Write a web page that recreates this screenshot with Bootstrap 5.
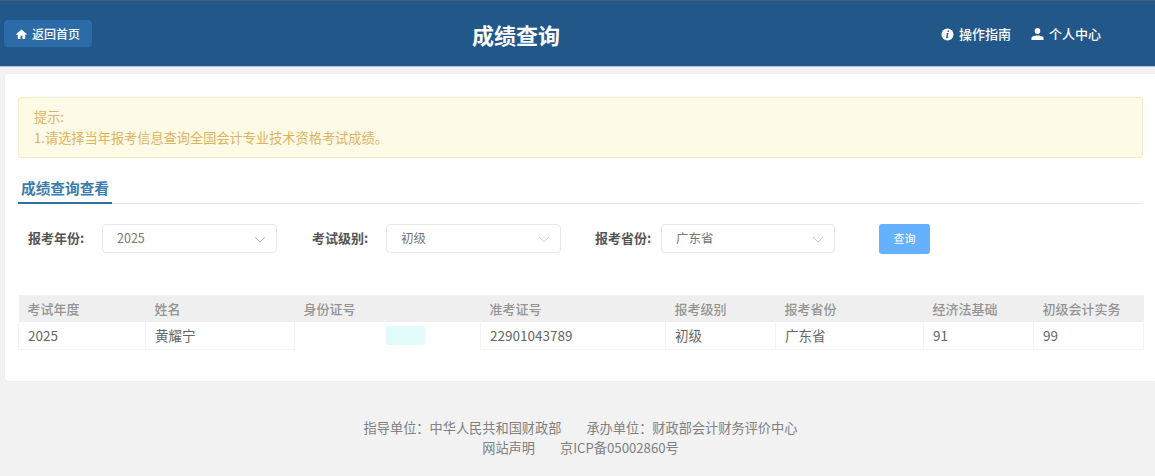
<!DOCTYPE html>
<html lang="zh-CN">
<head>
<meta charset="utf-8">
<title>成绩查询</title>
<link rel="stylesheet" href="https://cdn.jsdelivr.net/npm/bootstrap@5.3.0/dist/css/bootstrap.min.css">
<style>
html,body{height:476px;overflow:hidden}
body{background:#f2f2f2;font-family:"Liberation Sans","Noto Sans CJK SC",sans-serif;font-size:13px;color:#666}
.cj{font-family:"Noto Sans CJK SC",sans-serif}
.topbar{height:67px;background:#22578a;border-top:1px solid #4a6076;border-bottom:1px solid #a9c3de;padding:0 54px 0 4px;position:relative}
.home-btn{height:27px;width:88px;background:#2b6ca8;color:#fff;font-size:12px;font-weight:500;border:0;border-radius:4px;padding:0;gap:5px;text-decoration:none}
.home-btn:hover{background:#2b6ca8;color:#fff}
.page-title{position:absolute;left:0;right:0;top:18px;text-align:center;margin:0;padding-right:123px;font-size:22px;line-height:30px;font-weight:700;color:#fff}
.top-link{color:#fff;font-size:13px;font-weight:500;gap:5px;text-decoration:none;margin-top:1px}
.top-links{gap:20px}
.panel{margin:7px 0 0 5px;height:307px;background:#fff;border-radius:4px 0 0 4px;padding:23px 12px 0 13px;box-shadow:0 0 2px rgba(0,0,0,.05)}
.tip{height:61px;background:#fdfbe6;border:1px solid #f4ecc8;border-radius:3px;color:#e0b25f;font-size:13.2px;line-height:21px;padding:8px 15px;margin:0}
.tab-line{height:33px;margin-top:13px;border-bottom:1px solid #e2e6ea}
.tab-item{display:inline-block;height:33px;padding:5px 3px 0;color:#3b7cae;font-size:14.67px;line-height:24px;font-weight:700;border-bottom:2px solid #2f6f9f}
.query-row{margin-top:19px;padding-left:10px;height:30px}
.q-label{font-weight:700;font-size:13px;color:#555;white-space:nowrap;width:57px}
.q-select{height:29px;font-size:12.5px;color:#777;border:1px solid #e6e8ec;border-radius:4px;padding:0 15px 0 14px;background:#fff}
.q-select svg{width:12px;height:7px;margin-right:-5px;margin-top:3px}
.sel-year{width:175px;margin:0 35px 0 17px}
.sel-level{width:175px;margin:0 34px 0 17px}
.sel-prov{width:174px;margin-left:9px}
.q-btn{width:51px;height:30px;margin:1px 0 0 44px;background:#66b1ff;border:0;border-radius:3px;color:#fff;font-size:11px;padding:0}
.q-btn:hover{background:#66b1ff;color:#fff}
.score-table{width:1125px;margin:42px 0 0;table-layout:fixed;font-size:13px;color:#666}
.score-table th,.score-table td{padding:0 0 0 9px;height:27px;vertical-align:middle;line-height:20px;border:0;box-shadow:none}
.score-table thead th{background:#efefef;color:#949494;font-weight:500}
.score-table tbody td{border:1px solid #f3f4f6;border-width:0 1px 1px 1px;background:#fff;color:#666;font-size:13.5px}
.score-table tbody td.id-cell{position:relative;padding:0;border-bottom-color:#fff}
.smudge{position:absolute;left:91px;top:4px;width:39px;height:19px;background:#e2fbfb;border-radius:3px}
.site-foot{margin-top:37px;padding-left:6px;text-align:center;line-height:20px;font-size:13.2px;color:#808080}
.site-foot span+span{margin-left:25px}
</style>
</head>
<body>
<header class="topbar d-flex align-items-center justify-content-between cj">
  <a href="#" class="btn home-btn d-flex align-items-center justify-content-center">
    <svg width="11" height="10" viewBox="0 0 12 11" aria-hidden="true"><path fill="#fff" d="M6 .5 0 5.7l1 .9.9-.7V11h3V7.5h2.2V11h3V5.9l.9.7 1-.9z"/></svg>
    返回首页
  </a>
  <h1 class="page-title">成绩查询</h1>
  <nav class="d-flex align-items-center top-links">
    <a href="#" class="top-link d-flex align-items-center">
      <svg width="13" height="13" viewBox="0 0 13 13" aria-hidden="true"><circle cx="6.500" cy="6.500" r="6" fill="#fff"/><path fill="#22578a" d="M6.600 2.600h1.500l-.3 1.400H6.300zM6 5h1.500l-.9 4.200c0 .3.3.3.8.1l-.1.7c-1 .5-2.400.4-2.100-.8l.6-3.400-.7-.1z"/></svg>
      操作指南
    </a>
    <a href="#" class="top-link d-flex align-items-center">
      <svg width="13" height="12" viewBox="0 0 13 12" aria-hidden="true"><ellipse cx="6.500" cy="3" rx="2.800" ry="3" fill="#fff"/><path fill="#fff" d="M.5 12V9.800c0-1 2.400-2.300 6-2.300s6 1.300 6 2.300V12z"/></svg>
      个人中心
    </a>
  </nav>
</header>

<main class="panel">
  <div class="tip cj">提示:<br>1.请选择当年报考信息查询全国会计专业技术资格考试成绩。</div>
  <div class="tab-line"><span class="tab-item cj">成绩查询查看</span></div>

  <div class="query-row d-flex align-items-center cj">
    <span class="q-label">报考年份:</span>
    <div class="q-select sel-year d-flex align-items-center justify-content-between"><span>2025</span>
      <svg viewBox="0 0 12 7" aria-hidden="true"><path d="M1 1l5 5 5-5" fill="none" stroke="#c9ccd2"/></svg></div>
    <span class="q-label">考试级别:</span>
    <div class="q-select sel-level d-flex align-items-center justify-content-between"><span>初级</span>
      <svg viewBox="0 0 12 7" aria-hidden="true"><path d="M1 1l5 5 5-5" fill="none" stroke="#c9ccd2"/></svg></div>
    <span class="q-label">报考省份:</span>
    <div class="q-select sel-prov d-flex align-items-center justify-content-between"><span>广东省</span>
      <svg viewBox="0 0 12 7" aria-hidden="true"><path d="M1 1l5 5 5-5" fill="none" stroke="#c9ccd2"/></svg></div>
    <button type="button" class="btn q-btn">查询</button>
  </div>

  <table class="table score-table cj">
    <colgroup>
      <col style="width:127px"><col style="width:149px"><col style="width:186px"><col style="width:185px">
      <col style="width:110px"><col style="width:148px"><col style="width:110px"><col style="width:110px">
    </colgroup>
    <thead>
      <tr><th>考试年度</th><th>姓名</th><th>身份证号</th><th>准考证号</th><th>报考级别</th><th>报考省份</th><th>经济法基础</th><th>初级会计实务</th></tr>
    </thead>
    <tbody>
      <tr><td>2025</td><td>黄耀宁</td><td class="id-cell"><span class="smudge"></span></td><td>22901043789</td><td>初级</td><td>广东省</td><td>91</td><td>99</td></tr>
    </tbody>
  </table>
</main>

<footer class="site-foot cj">
  <div><span>指导单位：中华人民共和国财政部</span><span>承办单位：财政部会计财务评价中心</span></div>
  <div><span>网站声明</span><span>京ICP备05002860号</span></div>
</footer>
<script src="https://cdn.jsdelivr.net/npm/bootstrap@5.3.0/dist/js/bootstrap.bundle.min.js"></script>
</body>
</html>
